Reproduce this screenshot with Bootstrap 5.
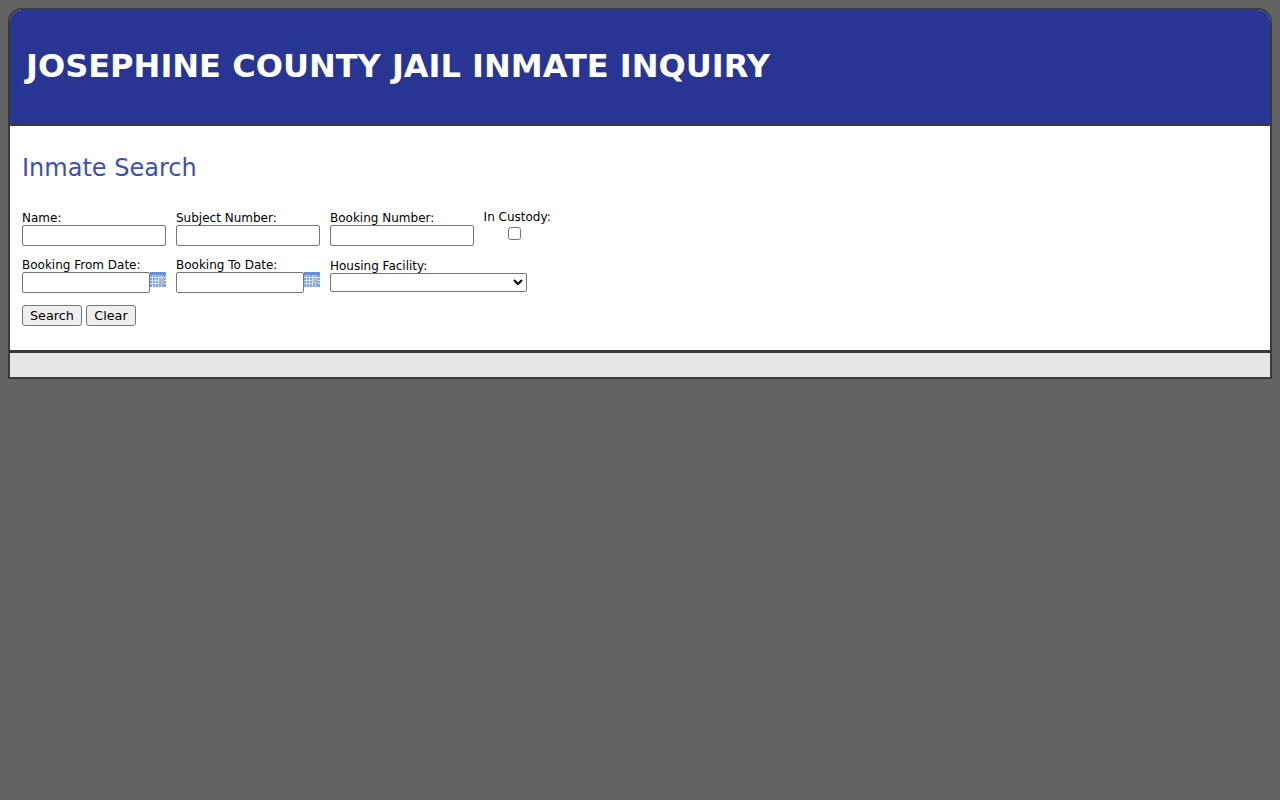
<!DOCTYPE html>
<html lang="en">
<head>
<meta charset="utf-8">
<title>Josephine County Jail Inmate Inquiry</title>
<link href="https://cdn.jsdelivr.net/npm/bootstrap@5.3.0/dist/css/bootstrap.min.css" rel="stylesheet">
<style>
html, body { height: 100%; }
body { background: #636363; font-family: "DejaVu Sans", sans-serif; font-size: 12px; color: #000; padding: 8px; line-height: normal; }
.shell { border: 2px solid #3a3a3a; border-radius: 14px 14px 0 0; overflow: hidden; background: #fff; }
.banner { background: #283593; height: 116px; border-bottom: 2px solid #3a3a3a; padding-left: 16px; padding-bottom: 2px; }
.banner h1 { font-family: "DejaVu Sans", sans-serif; font-size: 32.04px; font-weight: 700; color: #fff; margin: 0; line-height: 1; }
.content { padding: 29px 12px 24px; height: 224px; }
.content h2 { font-size: 24px; font-weight: 400; color: #3f4fb0; margin: 0 0 29px; line-height: 27px; }
.fieldrow { display: flex; gap: 10px; }
.fieldrow + .fieldrow { margin-top: 12px; }
.fld { width: 144px; display: flex; flex-direction: column; }
.fld label { line-height: 14px; height: 14px; margin: 0; white-space: nowrap; }
.txt { width: 144px; height: 21px; border: 1px solid #767676; border-radius: 2px; padding: 1px 2px; font: 12px "DejaVu Sans", sans-serif; background: #fff; }
.txt.short { width: 128px; }
.dateline { display: flex; align-items: flex-start; }
.calicon { width: 16px; height: 15px; display: block; }
.fld.wide { width: 197px; }
.fld.wide label { margin-top: 1px; }
.fld.wide select { width: 197px; height: 19px; border: 1px solid #767676; border-radius: 2px; font: 12px "DejaVu Sans", sans-serif; background: #fff; }
.custody { width: 66px; margin-left: -0.4px; }
.custody label { margin-top: -1px; }
.custody input { width: 13px; height: 13px; margin: 3px 0 0 24.4px; }
.actions { display: flex; gap: 4px; margin-top: 12px; }
.actbtn { height: 21px; padding: 1px 7px 0; border: 1px solid #767676; border-radius: 3px; background: #efefef; color: #000; font: 12.8px "DejaVu Sans", sans-serif; line-height: 1; }
.actbtn + .actbtn { width: 50px; }
.bottombar { background: #e6e6e6; height: 27px; border-top: 3px solid #3a3a3a; }
</style>
</head>
<body>
<div class="shell">
  <header class="banner d-flex align-items-center">
    <h1>JOSEPHINE COUNTY JAIL INMATE INQUIRY</h1>
  </header>
  <main class="content">
    <h2>Inmate Search</h2>
    <form>
      <div class="fieldrow">
        <div class="fld"><label for="n">Name:</label><input id="n" class="txt" type="text"></div>
        <div class="fld"><label for="s">Subject Number:</label><input id="s" class="txt" type="text"></div>
        <div class="fld"><label for="b">Booking Number:</label><input id="b" class="txt" type="text"></div>
        <div class="fld custody"><label for="c">In Custody:</label><input id="c" type="checkbox"></div>
      </div>
      <div class="fieldrow">
        <div class="fld"><label for="f">Booking From Date:</label>
          <div class="dateline"><input id="f" class="txt short" type="text">
            <svg class="calicon" viewBox="0 0 16 15"><rect width="16" height="15" fill="#7fa6e4"/><path d="M0 .5h16" stroke="#4f7cc8" stroke-dasharray="1 1"/><rect y="1" width="16" height="1.5" fill="#5f8ad2"/><path d="M0 5.5h16M0 8.5h16M0 11.5h16M2.5 3v12M5.5 3v12M8.5 3v12M11.5 3v12" stroke="#d3e0f5"/><rect x="9" y="6" width="5" height="6" fill="#b4b8bf"/></svg>
          </div></div>
        <div class="fld"><label for="t">Booking To Date:</label>
          <div class="dateline"><input id="t" class="txt short" type="text">
            <svg class="calicon" viewBox="0 0 16 15"><rect width="16" height="15" fill="#7fa6e4"/><path d="M0 .5h16" stroke="#4f7cc8" stroke-dasharray="1 1"/><rect y="1" width="16" height="1.5" fill="#5f8ad2"/><path d="M0 5.5h16M0 8.5h16M0 11.5h16M2.5 3v12M5.5 3v12M8.5 3v12M11.5 3v12" stroke="#d3e0f5"/><rect x="9" y="6" width="5" height="6" fill="#b4b8bf"/></svg>
          </div></div>
        <div class="fld wide"><label for="h">Housing Facility:</label><select id="h"><option></option></select></div>
      </div>
      <div class="actions">
        <button type="button" class="actbtn">Search</button>
        <button type="button" class="actbtn">Clear</button>
      </div>
    </form>
  </main>
  <footer class="bottombar"></footer>
</div>
<script src="https://cdn.jsdelivr.net/npm/bootstrap@5.3.0/dist/js/bootstrap.bundle.min.js"></script>
</body>
</html>
